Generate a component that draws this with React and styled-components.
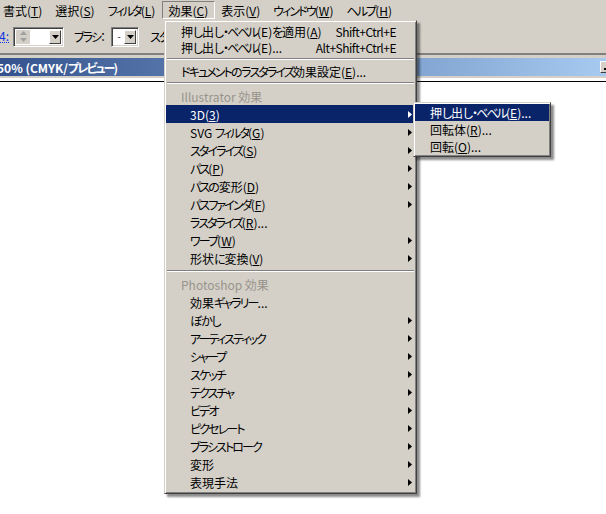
import React from 'react';
import styled, { createGlobalStyle, css } from 'styled-components';

const GlobalStyle = createGlobalStyle`
  html, body {
    margin: 0;
    padding: 0;
    background: #fff;
  }
  body {
    font-family: "Noto Sans CJK JP", "Liberation Sans", sans-serif;
    font-size: 12px;
    font-feature-settings: "palt";
    color: #000;
  }
`;

const Screen = styled.div`
  position: relative;
  width: 606px;
  height: 514px;
  overflow: hidden;
  background: #fff;
`;

const MenuBar = styled.div`
  display: flex;
  height: 20px;
  padding-top: 1px;
  box-sizing: border-box;
  background: #d4d0c8;
`;

const BarItem = styled.div`
  height: 18px;
  line-height: 17px;
  padding: 0 6px 0 5px;
  border: 1px solid transparent;
  box-sizing: border-box;
  white-space: nowrap;

  &:first-child {
    padding-left: 2px;
  }

  ${p => p.$pressed && css`
    border-color: #808080 #fff #fff #808080;
  `}
`;

const Key = styled.span`
  text-decoration: underline;
  text-underline-offset: 1px;
`;

// MS UI Gothic kana are narrower than the kanji
const Kana = styled.span`
  letter-spacing: ${p => (p.$hira ? -1.2 : -1.9)}px;
`;

const Toolbar = styled.div`
  display: flex;
  align-items: center;
  height: 33px;
  background: #d4d0c8;
  white-space: nowrap;
`;

const LinkLabel = styled.span`
  color: #1030e0;
  border-bottom: 1px dotted #1030e0;
  line-height: 12px;
  margin-left: -1px;
`;

const SunkenBox = styled.div`
  display: flex;
  height: 20px;
  width: ${p => p.$w}px;
  margin-left: ${p => p.$ml}px;
  box-sizing: border-box;
  border: 1px solid;
  border-color: #808080 #fff #fff #808080;
  box-shadow: inset 1px 1px #404040, inset -1px -1px #d4d0c8;
  padding: 2px;
  background: #fff;
`;

const Spinner = styled.div`
  display: flex;
  flex-direction: column;
  justify-content: space-around;
  align-items: center;
  width: 14px;
  background: #d4d0c8;
  margin-right: 1px;
`;

const Field = styled.div`
  flex: 1;
  display: flex;
  align-items: center;
  justify-content: center;
  font-size: 9px;
  line-height: 1;
  background: #fff;
`;

const DropButton = styled.div`
  width: 12px;
  display: flex;
  align-items: center;
  justify-content: center;
  background: #d4d0c8;
  box-sizing: border-box;
  border: 1px solid;
  border-color: #fff #404040 #404040 #fff;
`;

const ToolLabel = styled.span`
  margin-left: ${p => p.$ml}px;
`;

const ToolbarEdge = styled.div`
  height: 2px;
  background: #808080;
  border-bottom: 3px solid #d4d0c8;
`;

const TitleBar = styled.div`
  display: flex;
  align-items: center;
  height: 18px;
  overflow: hidden;
  background: linear-gradient(to right, #34538e, #a6caf0);
  color: #fff;
  font-weight: bold;
  white-space: nowrap;
`;

const TitleText = styled.span`
  margin-left: -3px;
`;

const MinButton = styled.div`
  margin-left: auto;
  margin-right: -8px;
  width: 14px;
  height: 12px;
  box-sizing: border-box;
  background: #d4d0c8;
  border: 1px solid;
  border-color: #fff #404040 #404040 #fff;
  display: flex;
  align-items: flex-end;
  padding: 0 0 2px 3px;

  &::after {
    content: '';
    width: 6px;
    height: 2px;
    background: #000;
  }
`;

const Canvas = styled.div`
  border-top: 2px solid #d4d0c8;
  padding-top: 3px;
  background: #fff;
  height: 440px;

  &::before {
    content: '';
    display: block;
    height: 1px;
    background: #000;
  }
`;

const Dropdown = styled.div`
  position: absolute;
  left: ${p => p.$x}px;
  top: ${p => p.$y}px;
  width: ${p => p.$w}px;
  box-sizing: border-box;
  padding: 2px 1px;
  background: #d4d0c8;
  border: 1px solid;
  border-color: #d4d0c8 #404040 #404040 #d4d0c8;
  box-shadow: inset 1px 1px #fff, inset -1px -1px #808080, 3px 3px 2px rgba(0, 0, 0, 0.45);
  white-space: nowrap;
`;

const SubMenu = styled(Dropdown)`
  left: calc(100% - 2px);
  top: -3px;
  padding: 1px 1px;
`;

const MenuRow = styled.div`
  position: relative;
  display: flex;
  align-items: center;
  height: ${p => p.$h || 18}px;
  padding-left: ${p => (p.$indent ? 24 : 15)}px;
  padding-right: 3px;
  color: ${p => (p.$active ? '#fff' : p.$disabled ? '#98948c' : '#000')};
  background: ${p => (p.$active ? '#0a246a' : 'transparent')};
`;

const Shortcut = styled.span`
  margin-left: auto;
  margin-right: 16px;
  letter-spacing: -0.5px;
`;

const Arrow = styled.svg`
  margin-left: auto;
  fill: currentColor;
`;

const Separator = styled.div`
  height: 8px;
  box-sizing: border-box;
  padding: 3px 1px 0;

  &::after {
    content: '';
    display: block;
    border-top: 1px solid #808080;
    border-bottom: 1px solid #fff;
  }
`;

const barItems = [
  ['書式', 'T'],
  ['選択', 'S'],
  ['フィルタ', 'L'],
  ['効果', 'C', true],
  ['表示', 'V'],
  ['ウィンドウ', 'W'],
  ['ヘルプ', 'H'],
];

const effectItems = [
  { text: '押し出し・ベベル(E)を適用(&A)', sc: 'Shift+Ctrl+E', h: 16 },
  { text: '押し出し・ベベル(E)...', sc: 'Alt+Shift+Ctrl+E', h: 16 },
  { sep: true },
  { text: 'ドキュメントのラスタライズ効果設定(&E)...', h: 16 },
  { sep: true },
  { text: 'Illustrator 効果', disabled: true },
  { text: '3D(&3)', sub: true, indent: true, active: true },
  { text: 'SVG フィルタ(&G)', sub: true, indent: true },
  { text: 'スタイライズ(&S)', sub: true, indent: true },
  { text: 'パス(&P)', sub: true, indent: true },
  { text: 'パスの変形(&D)', sub: true, indent: true },
  { text: 'パスファインダ(&F)', sub: true, indent: true },
  { text: 'ラスタライズ(&R)...', indent: true },
  { text: 'ワープ(&W)', sub: true, indent: true },
  { text: '形状に変換(&V)', sub: true, indent: true },
  { sep: true },
  { text: 'Photoshop 効果', disabled: true },
  { text: '効果ギャラリー...', indent: true },
  { text: 'ぼかし', sub: true, indent: true },
  { text: 'アーティスティック', sub: true, indent: true },
  { text: 'シャープ', sub: true, indent: true },
  { text: 'スケッチ', sub: true, indent: true },
  { text: 'テクスチャ', sub: true, indent: true },
  { text: 'ビデオ', sub: true, indent: true },
  { text: 'ピクセレート', sub: true, indent: true },
  { text: 'ブラシストローク', sub: true, indent: true },
  { text: '変形', sub: true, indent: true },
  { text: '表現手法', sub: true, indent: true },
];

const threeDItems = [
  { text: '押し出し・ベベル(&E)...', active: true, h: 17 },
  { text: '回転体(&R)...', h: 17 },
  { text: '回転(&O)...', h: 17 },
];

const KANA = /([\u3040-\u309f]+|[\u30a0-\u30ff]+)/;

const withKana = (s, prefix) =>
  s.split(KANA).map((part, i) =>
    i % 2 ? (
      <Kana key={prefix + i} $hira={part.charCodeAt(0) < 0x30a0}>
        {part}
      </Kana>
    ) : (
      part
    )
  );

// "&" marks the mnemonic letter
const Label = ({ text }) => {
  const i = text.indexOf('&');
  if (i < 0) return <span>{withKana(text, 'a')}</span>;
  return (
    <span>
      {withKana(text.slice(0, i), 'a')}
      <Key>{text[i + 1]}</Key>
      {withKana(text.slice(i + 2), 'b')}
    </span>
  );
};

const SubArrow = () => (
  <Arrow width="4" height="7" viewBox="0 0 4 7">
    <polygon points="0,0 4,3.5 0,7" />
  </Arrow>
);

const Triangle = ({ color = '#000', up }) => (
  <svg width="7" height="4" viewBox="0 0 7 4" fill={color}>
    <polygon points={up ? '0,4 7,4 3.5,0' : '0,0 7,0 3.5,4'} />
  </svg>
);

const MenuList = ({ items, children }) =>
  items.map((item, i) =>
    item.sep ? (
      <Separator key={i} />
    ) : (
      <MenuRow
        key={i}
        $h={item.h}
        $indent={item.indent}
        $active={item.active}
        $disabled={item.disabled}
      >
        <Label text={item.text} />
        {item.sc && <Shortcut>{item.sc}</Shortcut>}
        {item.sub && <SubArrow />}
        {item.active && item.sub && children}
      </MenuRow>
    )
  );

const App = () => (
  <Screen>
    <GlobalStyle />
    <MenuBar>
      {barItems.map(([name, key, open]) => (
        <BarItem key={name} $pressed={open}>
          <Label text={`${name}(&${key})`} />
        </BarItem>
      ))}
    </MenuBar>

    <Toolbar>
      <LinkLabel>4:</LinkLabel>
      <SunkenBox $w={51} $ml={4}>
        <Spinner>
          <Triangle color="#a0a0a0" up />
          <Triangle color="#a0a0a0" />
        </Spinner>
        <Field />
        <DropButton>
          <Triangle />
        </DropButton>
      </SunkenBox>
      <ToolLabel $ml={10}>
        <Label text="ブラシ：" />
      </ToolLabel>
      <SunkenBox $w={28} $ml={5}>
        <Field>-</Field>
        <DropButton>
          <Triangle />
        </DropButton>
      </SunkenBox>
      <ToolLabel $ml={11}>
        <Label text="スタイル：" />
      </ToolLabel>
    </Toolbar>
    <ToolbarEdge />

    <TitleBar>
      <TitleText>
        <Label text="50% (CMYK/プレビュー)" />
      </TitleText>
      <MinButton />
    </TitleBar>
    <Canvas />

    <Dropdown $x={164} $y={20} $w={253}>
      <MenuList items={effectItems}>
        <SubMenu $w={138}>
          <MenuList items={threeDItems} />
        </SubMenu>
      </MenuList>
    </Dropdown>
  </Screen>
);

export default App;
